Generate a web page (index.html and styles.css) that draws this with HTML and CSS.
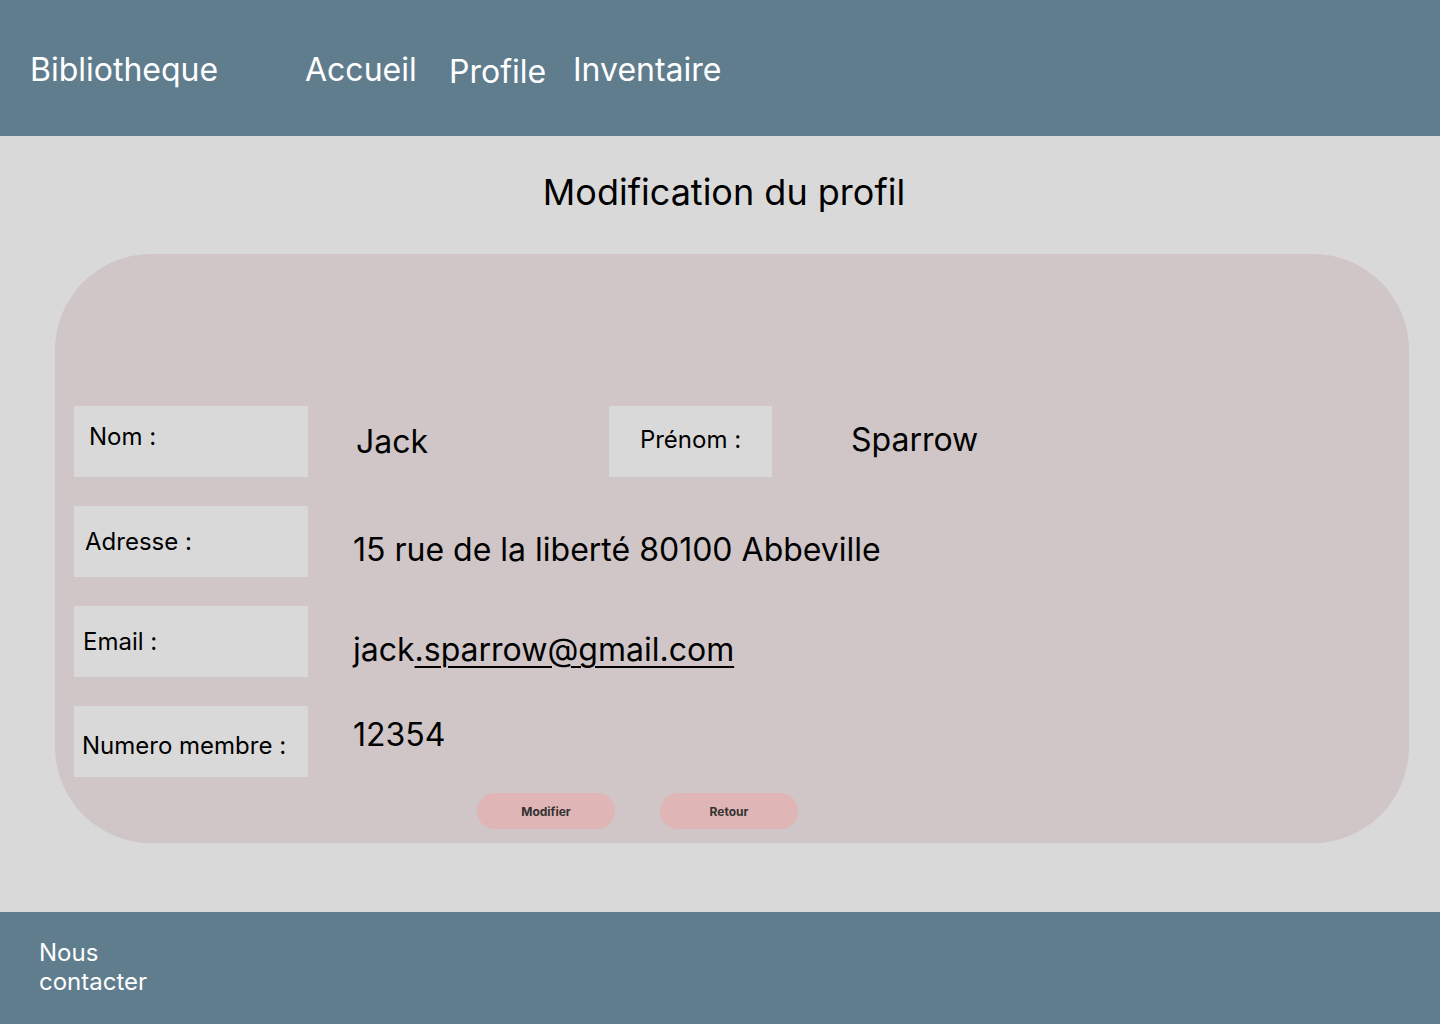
FILE: index.html
```html
<!DOCTYPE html>
<html lang="fr">
<head>
<meta charset="utf-8">
<title>Modification du profil</title>
<link rel="stylesheet" href="styles.css">
</head>
<body>
<header class="topbar">
  <div class="brand">Bibliotheque</div>
  <nav class="nav">
    <a class="nav-link">Accueil</a>
    <a class="nav-link nav-link--low">Profile</a>
    <a class="nav-link">Inventaire</a>
  </nav>
</header>
<main class="main">
  <h1 class="title">Modification du profil</h1>
  <section class="card">
    <div class="row">
      <div class="label label--nom">Nom :</div>
      <div class="value value--jack">Jack</div>
      <div class="label label--prenom">Prénom :</div>
      <div class="value value--sparrow">Sparrow</div>
    </div>
    <div class="row">
      <div class="label label--adresse">Adresse :</div>
      <div class="value value--low">15 rue de la liberté 80100 Abbeville</div>
    </div>
    <div class="row">
      <div class="label label--email">Email :</div>
      <div class="value value--low">jack<span class="underline">.sparrow@gmail.com</span></div>
    </div>
    <div class="row">
      <div class="label label--numero">Numero membre :</div>
      <div class="value value--top">12354</div>
    </div>
    <div class="actions">
      <button class="btn">Modifier</button>
      <button class="btn">Retour</button>
    </div>
  </section>
</main>
<footer class="footer">
  <div class="contact">Nous<br>contacter</div>
</footer>
</body>
</html>
```

FILE: styles.css
```css
* { box-sizing: border-box; }
html, body { margin: 0; padding: 0; }
body {
  width: 1440px;
  height: 1024px;
  display: flex;
  flex-direction: column;
  font-family: Inter, "Noto Sans", sans-serif;
  background: #d9d9d9;
  color: #000;
}
.topbar {
  height: 136px;
  flex: none;
  background: #607d8e;
  display: flex;
  align-items: center;
  padding: 2px 0 0 30px;
  color: #fff;
}
.brand {
  font-size: 32px;
  width: 275px;
}
.nav { display: flex; align-items: center; }
.nav-link {
  font-size: 32px;
  color: #fff;
}
.nav-link:nth-child(1) { width: 144px; }
.nav-link:nth-child(2) { width: 124px; }
.nav-link--low { position: relative; top: 2px; }
.main {
  flex: 1;
  display: flex;
  flex-direction: column;
  align-items: center;
}
.title {
  font-weight: 400;
  font-size: 36px;
  line-height: 44px;
  margin: 34px 0 0 8px;
}
.card {
  margin-top: 40px;
  width: 1354px;
  margin-left: 24px;
  height: 589px;
  background: #d0c6c7;
  border-radius: 96px;
  padding: 152px 0 0 19px;
  display: flex;
  flex-direction: column;
  gap: 29px;
}
.row {
  display: flex;
  align-items: center;
  height: 71px;
}
.label {
  width: 234px;
  height: 71px;
  background: #d9d9d9;
  font-size: 24px;
  display: flex;
  align-items: center;
  flex: none;
}
.label--nom { padding: 0 0 10px 15px; }
.label--adresse { padding-left: 11px; }
.label--email { padding-left: 9px; }
.label--numero { padding: 8px 0 0 8px; }
.label--prenom {
  width: 163px;
  justify-content: center;
  padding-bottom: 4px;
}
.value {
  font-size: 32px;
  line-height: 39px;
  margin-left: 45px;
}
.value--jack { margin-left: 48px; width: 253px; flex: none; }
.value--sparrow { margin-left: 79px; padding-bottom: 5px; }
.value--low { padding-top: 16px; }
.value--top { padding-bottom: 14px; }
.underline {
  text-decoration: underline;
  text-decoration-thickness: 2px;
  text-underline-offset: 5px;
}
.actions {
  display: flex;
  gap: 45px;
  margin: -13px 0 0 403px;
}
.btn {
  width: 138px;
  height: 36px;
  border: none;
  border-radius: 18px;
  background: #e0b5b5;
  font-family: Inter, "Noto Sans", sans-serif;
  font-weight: 700;
  font-size: 12px;
  color: #333;
  padding: 0;
}
.footer {
  height: 112px;
  flex: none;
  background: #607d8e;
  padding: 26px 0 0 39px;
  color: #fff;
}
.contact {
  font-size: 24px;
  line-height: 29px;
}
```
